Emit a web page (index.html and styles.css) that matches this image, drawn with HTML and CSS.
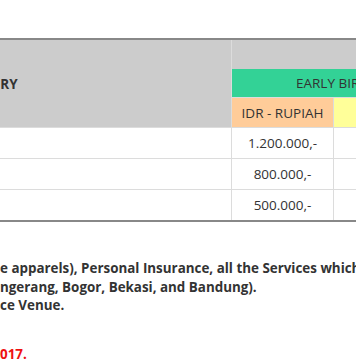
FILE: index.html
```html
<!DOCTYPE html>
<html>
<head>
<meta charset="utf-8">
<link rel="stylesheet" href="styles.css">
</head>
<body>
<div class="page">
  <div class="table-wrap">
    <table class="price">
      <colgroup>
        <col class="c1"><col class="c2"><col class="c3"><col class="c4">
      </colgroup>
      <thead>
        <tr class="h-top">
          <th class="cat" rowspan="3">CATEGORY</th>
          <th class="blank" colspan="3"></th>
        </tr>
        <tr class="h-mid">
          <th class="early" colspan="3">EARLY BIRD</th>
        </tr>
        <tr class="h-low">
          <th class="idr">IDR - RUPIAH</th>
          <th class="usd">USD - DOLLAR</th>
          <th class="usd2"></th>
        </tr>
      </thead>
      <tbody>
        <tr><td class="name">10K</td><td class="num">1.200.000,-</td><td></td><td></td></tr>
        <tr><td class="name">5K</td><td class="num">800.000,-</td><td></td><td></td></tr>
        <tr><td class="name">KIDS</td><td class="num">500.000,-</td><td></td><td></td></tr>
      </tbody>
    </table>
  </div>
  <div class="notes">
    <p class="line">e apparels), Personal Insurance, all the Services which</p>
    <p class="line">ngerang, Bogor, Bekasi, and Bandung).</p>
    <p class="line">ce Venue.</p>
    <p class="line red">017.</p>
  </div>
</div>
</body>
</html>
```
FILE: styles.css
```css
html, body {
  margin: 0;
  padding: 0;
  background: #fff;
}
.page {
  width: 356px;
  height: 364px;
  overflow: hidden;
  padding-top: 38px;
  box-sizing: border-box;
}
.table-wrap {
  width: 356px;
  overflow: hidden;
}
.price {
  margin-left: -60px;
  width: 620px;
  table-layout: fixed;
  border-collapse: collapse;
  font-family: "Open Sans", "Liberation Sans", sans-serif;
  font-size: 13.5px;
  color: #333;
  border-top: 2px solid #888;
  border-bottom: 2px solid #888;
}
.c1 { width: 291px; }
.c2 { width: 102px; }
.c3 { width: 102px; }
.c4 { width: 125px; }
.price th, .price td {
  padding: 0;
  border: 1px solid #dcdcdc;
}
.price thead th {
  background: #cccccc;
  font-weight: normal;
}
.price th.cat {
  text-align: left;
  padding-left: 6px;
  font-weight: bold;
  font-size: 13.5px;
  color: #333;
  border-left: none;
}
.h-top th { height: 29px; }
.h-mid th { height: 28px; }
.h-low th { height: 29px; }
.price th.blank { border-bottom: none; }
.price th.early {
  background: #33d296;
  text-align: left;
  padding-left: 64px;
  border-top: none;
}
.price th.idr {
  background: #ffcc99;
  text-align: center;
}
.price th.usd, .price th.usd2 {
  background: #ffff99;
  color: #ffff99;
}
.price td {
  height: 30px;
  background: #fff;
  text-align: center;
}
.price td.name { color: #fff; }
.notes {
  padding-top: 37px;
  font-family: "Open Sans", "Liberation Sans", sans-serif;
  font-weight: bold;
  font-size: 13.4px;
  color: #333;
  white-space: nowrap;
}
.line {
  margin: 0;
  line-height: 18.5px;
}
.line.red {
  color: #ee1111;
  margin-top: 30px;
}
```
